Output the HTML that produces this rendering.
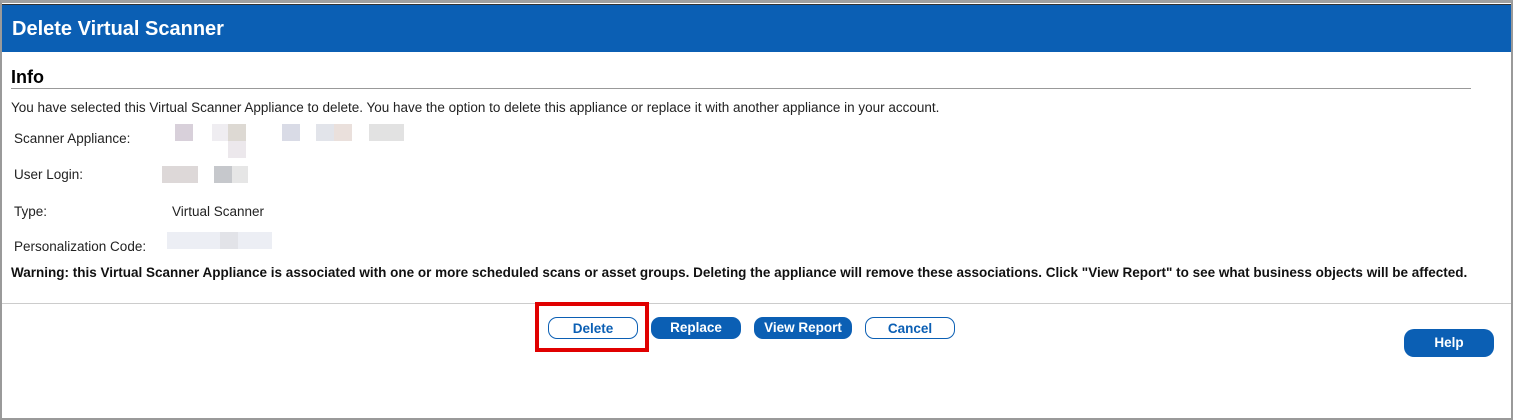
<!DOCTYPE html>
<html><head><style>
body{margin:0;width:1513px;height:419px;background:#fff;font-family:"Liberation Sans",Arial,sans-serif;position:relative;overflow:hidden}
.frame{position:absolute;left:0;top:0;width:1509px;height:415px;border:2px solid #9a9a9a;border-top:3px solid #a0a0a0;border-bottom:2px solid #9a9a9a}
.hdr{position:absolute;left:2px;top:4px;width:1509px;height:47px;background:#0b5fb4;border-top:1px solid #333}
.hdr span{position:absolute;left:10px;top:13px;color:#fff;font-weight:bold;font-size:20px}
.t{position:absolute;font-size:13.5px;color:#222;white-space:nowrap}
.info{position:absolute;left:11px;top:67px;font-size:18px;font-weight:bold;color:#000}
.hr{position:absolute;left:11px;top:88px;width:1460px;height:1px;background:#999}
.hr2{position:absolute;left:2px;top:303px;width:1509px;height:1px;background:#ccc}
.b{position:absolute;top:317px;height:22px;border-radius:9px;font-size:13.5px;font-weight:bold;text-align:center;line-height:22px;box-sizing:border-box}
.fill{background:#0b5fb4;color:#fff}
.out{border:1px solid #0b5fb4;color:#0b5fb4;background:#fff}
.px{position:absolute;height:17px}
</style></head><body>
<div class="frame"></div>
<div class="hdr"><span>Delete Virtual Scanner</span></div>
<div class="info">Info</div>
<div class="hr"></div>
<div class="t" style="left:11px;top:100px">You have selected this Virtual Scanner Appliance to delete. You have the option to delete this appliance or replace it with another appliance in your account.</div>
<div class="t" style="left:14px;top:131px">Scanner Appliance:</div>
<div class="px" style="left:175px;top:124px;width:18px;background:#d8d0da"></div>
<div class="px" style="left:228px;top:124px;width:18px;background:#ddd9d3"></div>
<div class="px" style="left:282px;top:124px;width:18px;background:#d9dbe6"></div>
<div class="px" style="left:316px;top:124px;width:18px;background:#e2e4ea"></div>
<div class="px" style="left:334px;top:124px;width:18px;background:#eae0dc"></div>
<div class="px" style="left:369px;top:124px;width:35px;background:#e2e2e2"></div>
<div class="px" style="left:212px;top:124px;width:16px;background:#efedf1"></div>
<div class="px" style="left:228px;top:141px;width:18px;background:#ece8ec"></div>
<div class="t" style="left:14px;top:167px">User Login:</div>
<div class="px" style="left:162px;top:166px;width:36px;background:#ddd8d8"></div>
<div class="px" style="left:214px;top:166px;width:18px;background:#c6c8cc"></div>
<div class="px" style="left:232px;top:166px;width:16px;background:#e6e6e6"></div>
<div class="t" style="left:14px;top:204px">Type:</div>
<div class="t" style="left:172px;top:204px">Virtual Scanner</div>
<div class="t" style="left:14px;top:239px">Personalization Code:</div>
<div class="px" style="left:167px;top:232px;width:105px;background:#eceef4"></div>
<div class="px" style="left:220px;top:232px;width:18px;background:#e2e3e8"></div>
<div class="t" style="left:11px;top:265px;font-weight:bold;color:#111">Warning: this Virtual Scanner Appliance is associated with one or more scheduled scans or asset groups. Deleting the appliance will remove these associations. Click "View Report" to see what business objects will be affected.</div>
<div class="hr2"></div>
<div style="position:absolute;left:535px;top:302px;width:106px;height:42px;border:4px solid #e00000"></div>
<div class="b out" style="left:548px;width:90px">Delete</div>
<div class="b fill" style="left:651px;width:90px">Replace</div>
<div class="b fill" style="left:754px;width:98px">View Report</div>
<div class="b out" style="left:865px;width:90px">Cancel</div>
<div class="b fill" style="left:1404px;top:329px;width:90px;height:28px;line-height:28px;border-radius:10px">Help</div>
</body></html>
